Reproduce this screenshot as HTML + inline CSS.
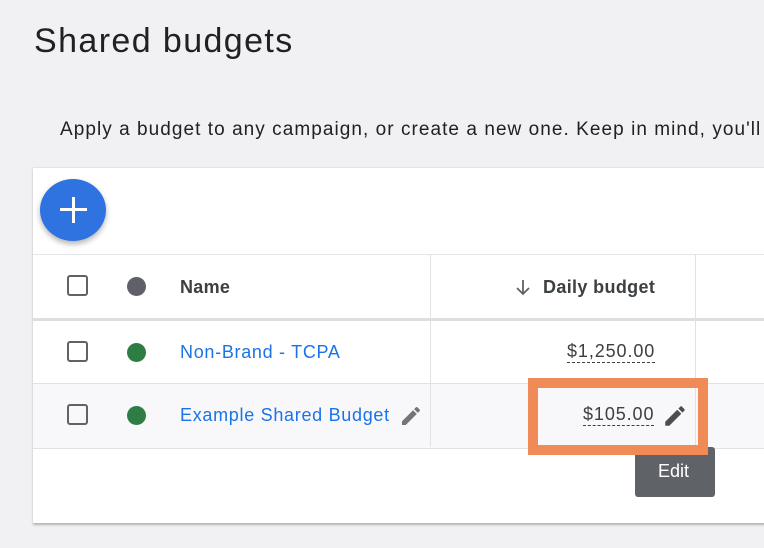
<!DOCTYPE html>
<html><head><style>
body{margin:0;width:764px;height:548px;background:#f1f1f4;font-family:"Liberation Sans",sans-serif;position:relative;overflow:hidden}
.a{position:absolute}
.cb{position:absolute;left:67px;width:21px;height:21px;border:2.5px solid #5f6368;border-radius:3px;box-sizing:border-box}
.dot{position:absolute;left:127px;width:19px;height:19px;border-radius:50%}
.lnk{position:absolute;left:180px;color:#1a73e8;font-size:18px;letter-spacing:0.7px}
.pen{position:absolute}
</style></head><body>
<div class="a" style="left:34px;top:22px;font-size:34px;color:#202124;letter-spacing:1.4px">Shared budgets</div>
<div class="a" style="left:60px;top:119px;font-size:19px;color:#202124;white-space:nowrap;letter-spacing:1.05px">Apply a budget to any campaign, or create a new one. Keep in mind, you'll</div>
<div class="a" style="left:33px;top:167px;width:740px;height:355px;background:#fff;border-top:1px solid #e3e3e6;box-shadow:0 2px 2px rgba(0,0,0,.25)"></div>
<div class="a" style="left:40px;top:179px;width:66px;height:62px;border-radius:50%;background:#2e73e0;box-shadow:0 3px 6px rgba(0,0,0,.3)"></div>
<div class="a" style="left:72px;top:197px;width:3px;height:26px;background:#fff"></div>
<div class="a" style="left:60px;top:208px;width:27px;height:3px;background:#fff"></div>
<div class="a" style="left:33px;top:254px;width:740px;height:1px;background:#e6e6e9"></div>
<div class="a" style="left:33px;top:318px;width:740px;height:3px;background:#dedee1"></div>
<div class="a" style="left:33px;top:383px;width:740px;height:64px;background:#f8f7fa;border-top:1px solid #e2e2e5;border-bottom:1px solid #e2e2e5"></div>
<div class="a" style="left:430px;top:255px;width:1px;height:192px;background:#e2e2e5"></div>
<div class="a" style="left:695px;top:255px;width:1px;height:192px;background:#e2e2e5"></div>
<div class="cb" style="top:275px"></div><div class="cb" style="top:341px"></div><div class="cb" style="top:404px"></div>
<div class="dot" style="top:277px;background:#5f6068"></div>
<div class="dot" style="top:343px;background:#2e7d44"></div>
<div class="dot" style="top:406px;background:#2e7d44"></div>
<div class="a" style="left:180px;top:277px;font-size:18px;font-weight:bold;color:#3c4043;letter-spacing:0.3px">Name</div>
<div class="lnk" style="top:342px">Non-Brand - TCPA</div>
<div class="lnk" style="top:405px">Example Shared Budget</div>
<svg class="pen" style="left:399px;top:404px" width="24" height="24" viewBox="0 0 24 24"><path fill="#757575" d="M3 17.25V21h3.75L17.8 9.94l-3.75-3.75L3 17.25zM20.7 7.04a1 1 0 0 0 0-1.41l-2.34-2.34a1 1 0 0 0-1.41 0l-1.83 1.83 3.75 3.75 1.83-1.83z"/></svg>
<svg class="a" style="left:513px;top:277px" width="20" height="20" viewBox="0 0 20 20"><path d="M10 3v14M4 11l6 6 6-6" stroke="#5f6368" stroke-width="1.8" fill="none"/></svg>
<div class="a" style="left:543px;top:277px;font-size:18px;font-weight:bold;color:#3c4043;letter-spacing:0.35px">Daily budget</div>
<div class="a" style="left:567px;top:341px;font-size:18px;color:#3c4043;border-bottom:1.5px dashed #3c4043;line-height:21px;letter-spacing:0.9px">$1,250.00</div>
<div class="a" style="left:583px;top:404px;font-size:18px;color:#3c4043;border-bottom:1.5px dashed #3c4043;line-height:21px;letter-spacing:0.9px">$105.00</div>
<svg class="pen" style="left:662px;top:403px" width="26" height="26" viewBox="0 0 24 24"><path fill="#4a4d52" d="M3 17.25V21h3.75L17.8 9.94l-3.75-3.75L3 17.25zM20.7 7.04a1 1 0 0 0 0-1.41l-2.34-2.34a1 1 0 0 0-1.41 0l-1.83 1.83 3.75 3.75 1.83-1.83z"/></svg>
<div class="a" style="left:635px;top:447px;width:80px;height:50px;background:#5f6368;border-radius:3px"></div>
<div class="a" style="left:528px;top:378px;width:180px;height:77px;box-sizing:border-box;border:10px solid #f08a57"></div>
<div class="a" style="left:658px;top:461px;font-size:18px;color:#fff">Edit</div>
</body></html>
